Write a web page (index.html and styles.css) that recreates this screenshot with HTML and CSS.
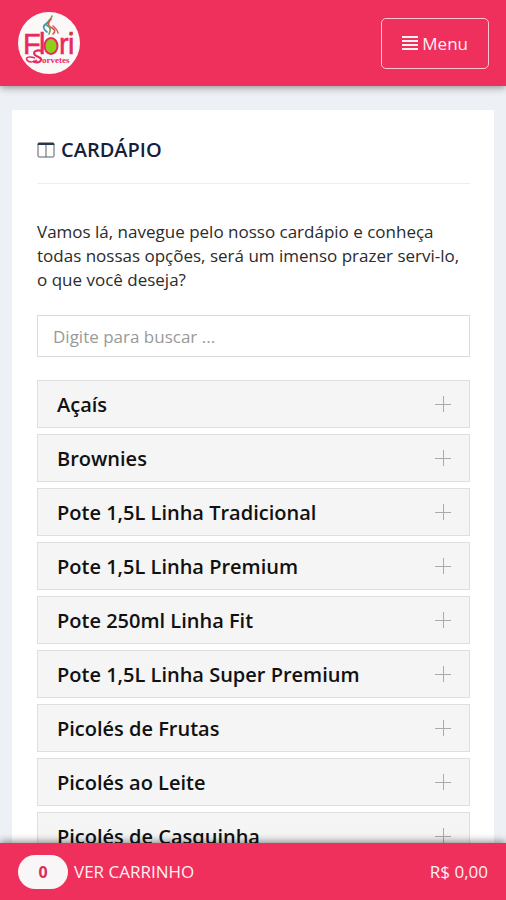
FILE: index.html
```html
<!DOCTYPE html>
<html lang="pt-BR">
<head>
<meta charset="utf-8">
<meta name="viewport" content="width=device-width, initial-scale=1">
<title>Flori Sorvetes</title>
<link rel="stylesheet" href="styles.css">
</head>
<body>
<header class="topbar">
  <a class="brand" href="#" aria-label="Flori Sorvetes">
    <svg class="logo" viewBox="0 0 62 62">
      <circle cx="31" cy="31" r="31" fill="#fbf9f8"/>
      <g fill="none" stroke-linecap="round" stroke-width="1.6">
        <path d="M34 4c-1 4-5 5-5 8" stroke="#62a84c"/>
        <path d="M29 11c-5 3-4 6 0 9" stroke="#3f8fc4"/>
        <path d="M33 7c-4 5-3 7 1 9s3 4 1 6" stroke="#d94f55"/>
        <path d="M28 13c5 2 5 5 3 9" stroke="#62a84c"/>
        <path d="M35 14c3 3 5 4 5 7" stroke="#e4536a"/>
      </g>
      <text class="logo-name" y="42"><tspan x="5">F</tspan><tspan x="21">l</tspan><tspan x="41">r</tspan><tspan x="50">i</tspan></text>
      <ellipse cx="33" cy="34" rx="6.500" ry="8" fill="#91ce18" stroke="#e92862" stroke-width="2"/>
      <circle cx="53" cy="22" r="1.800" fill="#b84d22"/>
      <path d="M24 39c-5-2-10 1-7 4s7 2 6 5-6 3-8 1" fill="none" stroke="#e92862" stroke-width="2.200"/>
      <path d="M17 46c-5-2-10-1-8 2s7 2 10 0" fill="none" stroke="#e92862" stroke-width="1.500"/>
      <text class="logo-sub" x="24" y="51">orvetes</text>
    </svg>
  </a>
  <button class="menu-button" type="button">
    <svg class="menu-icon" viewBox="0 0 16 14"><path d="M0 1h16M0 5h16M0 9h16M0 13h16" stroke="currentColor" stroke-width="2"/></svg>
    Menu
  </button>
</header>

<main class="content">
  <section class="card">
    <h1 class="title">
      <svg class="title-icon" viewBox="0 0 18 16"><path d="M1 2v12q0 1 1 1h14q1 0 1-1V2M9 2v13" fill="none" stroke="#59616d"/><path d="M1 2.500V2q0-1 1-1h14q1 0 1 1v.5z" fill="#26364c" stroke="#26364c"/></svg>
      CARDÁPIO
    </h1>
    <p class="intro">Vamos lá, navegue pelo nosso cardápio e conheça todas nossas opções, será um imenso prazer servi-lo, o que você deseja?</p>
    <input class="search" type="search" placeholder="Digite para buscar ..." aria-label="Buscar no cardápio">
    <div class="categories">
      <button class="category" type="button">Açaís<span class="plus"></span></button>
      <button class="category" type="button">Brownies<span class="plus"></span></button>
      <button class="category" type="button">Pote 1,5L Linha Tradicional<span class="plus"></span></button>
      <button class="category" type="button">Pote 1,5L Linha Premium<span class="plus"></span></button>
      <button class="category" type="button">Pote 250ml Linha Fit<span class="plus"></span></button>
      <button class="category" type="button">Pote 1,5L Linha Super Premium<span class="plus"></span></button>
      <button class="category" type="button">Picolés de Frutas<span class="plus"></span></button>
      <button class="category" type="button">Picolés ao Leite<span class="plus"></span></button>
      <button class="category" type="button">Picolés de Casquinha<span class="plus"></span></button>
    </div>
  </section>
</main>

<footer class="cartbar">
  <a class="cart-link" href="#"><span class="cart-count">0</span>VER CARRINHO</a>
  <span class="cart-total">R$ 0,00</span>
</footer>
</body>
</html>
```
FILE: styles.css
```css
* {
  box-sizing: border-box;
}

body {
  margin: 0;
  height: 100vh;
  display: flex;
  flex-direction: column;
  background: #edf0f4;
  color: #2b2b2b;
  font-family: "Open Sans", sans-serif;
}

button,
input {
  font-family: inherit;
}

.topbar,
.cartbar {
  z-index: 1;
  flex: none;
  display: flex;
  align-items: center;
  justify-content: space-between;
  padding: 0 18px;
  background: #ef2f5c;
  color: #fff0f2;
}

.topbar {
  height: 86px;
  padding: 0 17px 0 18px;
  box-shadow: 0 1px 8px rgba(0, 0, 0, 0.45);
}

.brand,
.logo {
  display: block;
  width: 62px;
  height: 62px;
}

.logo-name {
  fill: #e92862;
  stroke: #e92862;
  stroke-width: 0.5px;
  font-family: "Liberation Sans", sans-serif;
  font-size: 29px;
}

.logo-sub {
  fill: #e92862;
  font-family: "Liberation Serif", serif;
  font-size: 9px;
  font-weight: bold;
}

.menu-button {
  display: flex;
  align-items: center;
  gap: 4px;
  height: 51px;
  padding: 0 20px;
  border: 1px solid #ffc6d2;
  border-radius: 5px;
  background: transparent;
  color: inherit;
  font-size: 17px;
}

.menu-icon {
  width: 16px;
  height: 14px;
}

.content {
  flex: 1;
  min-height: 0;
  overflow-y: auto;
  scrollbar-width: none;
  padding: 24px 12px;
}

.card {
  padding: 24px 24px 24px 25px;
  background: #fff;
}

.title {
  display: flex;
  align-items: center;
  gap: 6px;
  margin: 0 0 36px;
  padding-bottom: 17px;
  border-bottom: 1px solid #eeeeee;
  color: #14203c;
  font-size: 20px;
  line-height: 32px;
  font-weight: 600;
}

.title-icon {
  width: 18px;
  height: 16px;
}

.intro {
  margin: 0 0 23px;
  font-size: 17px;
  line-height: 24px;
}

.search {
  display: block;
  width: 100%;
  height: 42px;
  margin: 0 0 23px;
  padding: 0 15px;
  border: 1px solid #d8dcde;
  border-radius: 0;
  background: #fff;
  color: #333;
  font-size: 17px;
}

.search::placeholder {
  color: #999;
}

.categories {
  display: grid;
  gap: 6px;
}

.category {
  display: flex;
  align-items: center;
  justify-content: space-between;
  height: 48px;
  padding: 0 18px 0 19px;
  border: 1px solid #dfdfdf;
  background: #f5f5f5;
  color: #111;
  font-size: 20px;
  font-weight: 600;
  text-align: left;
}

.plus {
  width: 16px;
  height: 16px;
  background:
    linear-gradient(#aaa, #aaa) center / 16px 1px no-repeat,
    linear-gradient(#aaa, #aaa) center / 1px 16px no-repeat;
}

.cartbar {
  height: 57px;
  box-shadow: 0 -1px 8px rgba(0, 0, 0, 0.5);
  font-size: 17px;
}

.cart-link {
  display: flex;
  align-items: center;
  gap: 6px;
  color: inherit;
  text-decoration: none;
}

.cart-count {
  width: 50px;
  border-radius: 17px;
  background: #f8f6f6;
  color: #d92f58;
  font-size: 16px;
  font-weight: 700;
  line-height: 34px;
  text-align: center;
}
```
